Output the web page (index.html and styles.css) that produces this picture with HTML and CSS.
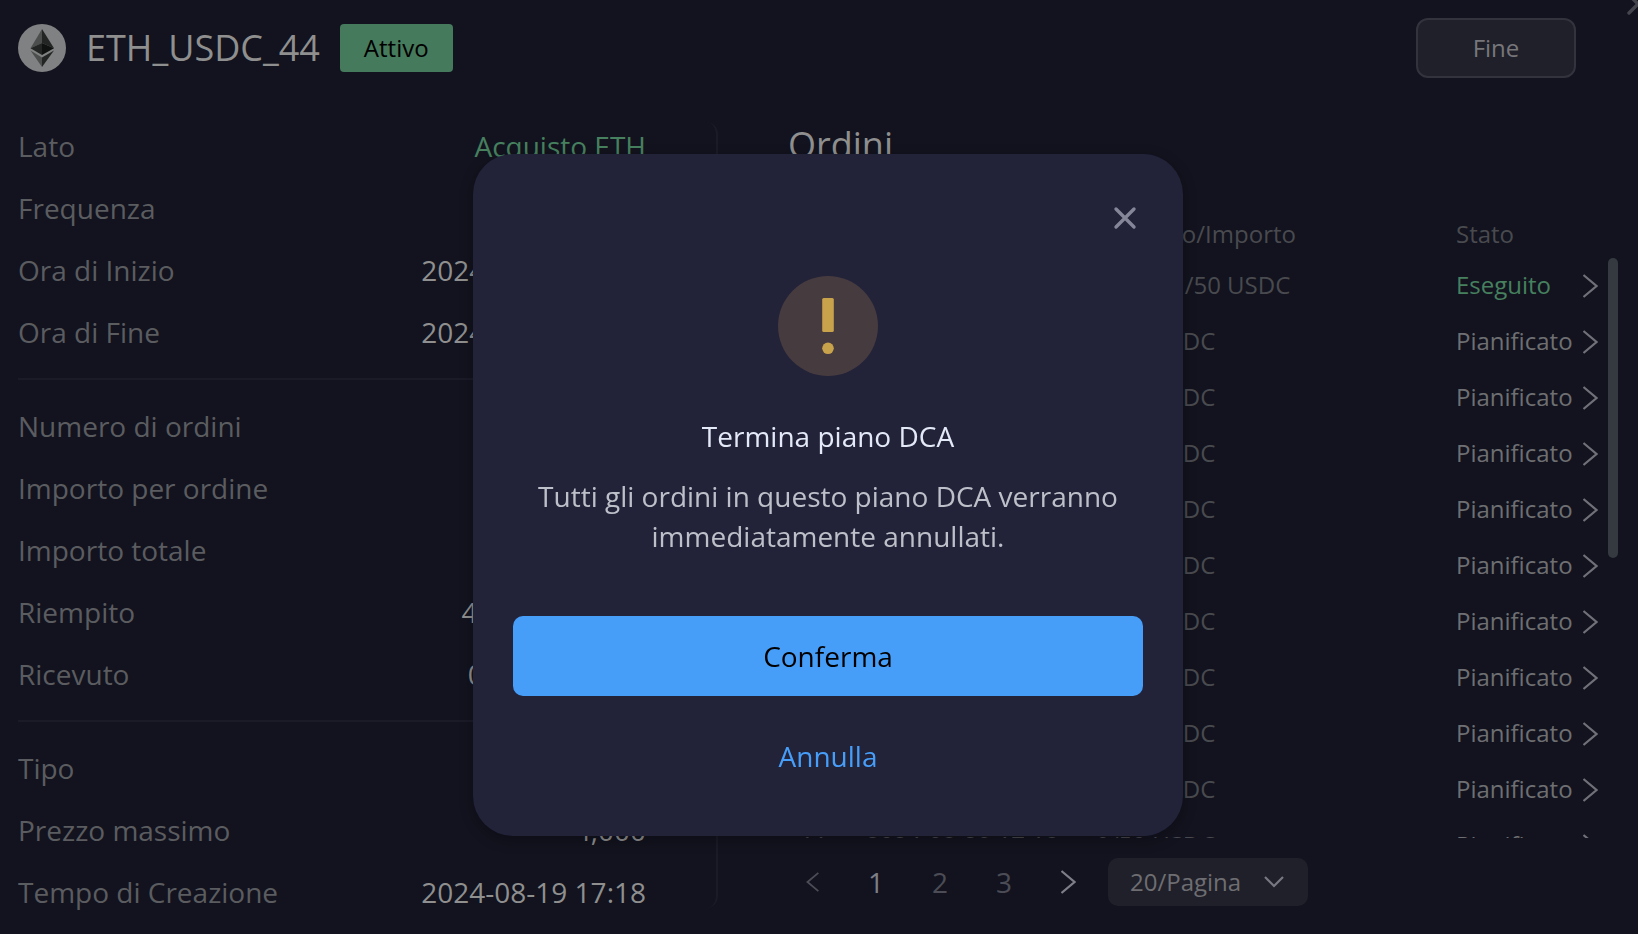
FILE: index.html
```html
<!DOCTYPE html>
<html lang="it">
<head>
<meta charset="utf-8">
<meta name="viewport" content="width=device-width, initial-scale=1">
<title>ETH_USDC_44</title>
<link rel="stylesheet" href="styles.css">
</head>
<body>
<svg class="sprite" aria-hidden="true">
  <symbol id="chevron" viewBox="0 0 15 24"><path d="M0.500 1L13.500 12L0.500 23" fill="none" stroke="currentColor" stroke-width="2.200"/></symbol>
  <symbol id="cross" viewBox="0 0 24 24"><path d="M3 3L21 21M21 3L3 21" fill="none" stroke="currentColor" stroke-width="3.400" stroke-linecap="round"/></symbol>
</svg>
<main class="page">
  <header class="header">
    <svg class="coin" viewBox="0 0 48 48" aria-hidden="true">
      <circle cx="24" cy="24" r="24" fill="#808182"/>
      <path d="M24 5L12.500 24.300L24 19z" fill="#4c4d4d"/>
      <path d="M24 5L36 24.300L24 19z" fill="#232424"/>
      <path d="M12.500 24.300L24 19V31z" fill="#232424"/>
      <path d="M36 24.300L24 19V31z" fill="#101111"/>
      <path d="M12.500 26.500L24 33.500V43z" fill="#4c4d4d"/>
      <path d="M36 26.500L24 33.500V43z" fill="#232424"/>
    </svg>
    <h1 class="title">ETH_USDC_44</h1>
    <span class="badge">Attivo</span>
    <button class="end-button" type="button">Fine</button>
  </header>
  <button class="page-close" type="button" aria-label="Chiudi"><svg class="icon-cross"><use href="#cross"/></svg></button>

  <div class="content">
    <section class="details">
      <dl class="group">
        <div class="row"><dt>Lato</dt><dd class="buy">Acquisto ETH</dd></div>
        <div class="row"><dt>Frequenza</dt><dd>Giornaliera</dd></div>
        <div class="row"><dt>Ora di Inizio</dt><dd>2024-08-19 17:18</dd></div>
        <div class="row"><dt>Ora di Fine</dt><dd>2024-10-07 17:18</dd></div>
      </dl>
      <dl class="group">
        <div class="row"><dt>Numero di ordini</dt><dd>50</dd></div>
        <div class="row"><dt>Importo per ordine</dt><dd>50 USDC</dd></div>
        <div class="row"><dt>Importo totale</dt><dd>2,500 USDC</dd></div>
        <div class="row"><dt>Riempito</dt><dd>49.9996 USDC</dd></div>
        <div class="row"><dt>Ricevuto</dt><dd>0.018963 ETH</dd></div>
      </dl>
      <dl class="group">
        <div class="row"><dt>Tipo</dt><dd>Limite</dd></div>
        <div class="row"><dt>Prezzo massimo</dt><dd>4,000</dd></div>
        <div class="row"><dt>Tempo di Creazione</dt><dd>2024-08-19 17:18</dd></div>
      </dl>
    </section>

    <section class="orders">
      <h2 class="orders-title">Ordini</h2>
      <div class="orders-scroll">
        <table class="table">
          <colgroup><col class="col-number"><col class="col-time"><col><col class="col-state"><col class="col-open"></colgroup>
          <thead><tr><th>#</th><th>Ora</th><th>Riempito/Importo</th><th>Stato</th><th></th></tr></thead>
          <tbody>
            <tr><td>1</td><td>2024-08-19 17:18</td><td>0.01891/50 USDC</td><td class="done">Eseguito</td><td class="open"><svg class="icon-chevron"><use href="#chevron"/></svg></td></tr>
            <tr><td>2</td><td>2024-08-20 17:18</td><td>0/50 USDC</td><td class="planned">Pianificato</td><td class="open"><svg class="icon-chevron"><use href="#chevron"/></svg></td></tr>
            <tr><td>3</td><td>2024-08-21 17:18</td><td>0/50 USDC</td><td class="planned">Pianificato</td><td class="open"><svg class="icon-chevron"><use href="#chevron"/></svg></td></tr>
            <tr><td>4</td><td>2024-08-22 17:18</td><td>0/50 USDC</td><td class="planned">Pianificato</td><td class="open"><svg class="icon-chevron"><use href="#chevron"/></svg></td></tr>
            <tr><td>5</td><td>2024-08-23 17:18</td><td>0/50 USDC</td><td class="planned">Pianificato</td><td class="open"><svg class="icon-chevron"><use href="#chevron"/></svg></td></tr>
            <tr><td>6</td><td>2024-08-24 17:18</td><td>0/50 USDC</td><td class="planned">Pianificato</td><td class="open"><svg class="icon-chevron"><use href="#chevron"/></svg></td></tr>
            <tr><td>7</td><td>2024-08-25 17:18</td><td>0/50 USDC</td><td class="planned">Pianificato</td><td class="open"><svg class="icon-chevron"><use href="#chevron"/></svg></td></tr>
            <tr><td>8</td><td>2024-08-26 17:18</td><td>0/50 USDC</td><td class="planned">Pianificato</td><td class="open"><svg class="icon-chevron"><use href="#chevron"/></svg></td></tr>
            <tr><td>9</td><td>2024-08-27 17:18</td><td>0/50 USDC</td><td class="planned">Pianificato</td><td class="open"><svg class="icon-chevron"><use href="#chevron"/></svg></td></tr>
            <tr><td>10</td><td>2024-08-28 17:18</td><td>0/50 USDC</td><td class="planned">Pianificato</td><td class="open"><svg class="icon-chevron"><use href="#chevron"/></svg></td></tr>
            <tr><td>11</td><td>2024-08-29 17:18</td><td>0/50 USDC</td><td class="planned">Pianificato</td><td class="open"><svg class="icon-chevron"><use href="#chevron"/></svg></td></tr>
          </tbody>
        </table>
        <div class="thumb"></div>
      </div>
      <nav class="pagination" aria-label="Pagine">
        <button class="page-button" type="button" aria-label="Precedente" disabled><svg class="icon-previous"><use href="#chevron"/></svg></button>
        <button class="page-button current" type="button" aria-current="page">1</button>
        <button class="page-button" type="button">2</button>
        <button class="page-button" type="button">3</button>
        <button class="page-button next" type="button" aria-label="Successiva"><svg class="icon-chevron"><use href="#chevron"/></svg></button>
        <div class="size">
          <select class="size-select" aria-label="Ordini per pagina"><option>20/Pagina</option><option>50/Pagina</option></select>
          <svg class="size-arrow" viewBox="0 0 20 12" aria-hidden="true"><path d="M1 1L10 10L19 1" fill="none" stroke="currentColor" stroke-width="2.200"/></svg>
        </div>
      </nav>
    </section>
  </div>
</main>

<div class="overlay">
  <div class="dialog" role="dialog" aria-modal="true" aria-labelledby="dialog-title">
    <button class="dialog-close" type="button" aria-label="Chiudi"><svg class="icon-cross"><use href="#cross"/></svg></button>
    <svg class="warning" viewBox="0 0 100 100" aria-hidden="true">
      <circle cx="50" cy="50" r="50" fill="#463b3f"/>
      <rect x="44.200" y="22" width="11.600" height="34" rx="1.500" fill="#c9a24c"/>
      <circle cx="50" cy="72.300" r="5.800" fill="#c9a24c"/>
    </svg>
    <h2 class="dialog-title" id="dialog-title">Termina piano DCA</h2>
    <p class="dialog-text">Tutti gli ordini in questo piano DCA verranno immediatamente annullati.</p>
    <button class="confirm" type="button">Conferma</button>
    <button class="cancel" type="button">Annulla</button>
  </div>
</div>
</body>
</html>
```
FILE: styles.css
```css
* { box-sizing: border-box; }

body {
  margin: 0;
  min-height: 100vh;
  overflow: hidden;
  background: #12131e;
  color: #8f8f8f;
  font-family: "Open Sans", "Noto Sans", sans-serif;
  font-size: 28px;
  line-height: 28px;
}

h1, h2, p, dl, dd { margin: 0; font-weight: 400; }

button, select {
  margin: 0;
  padding: 0;
  border: 0;
  background: none;
  color: inherit;
  font: inherit;
}

svg { display: block; }
.sprite { position: absolute; width: 0; height: 0; }
.icon-cross { width: 24px; height: 24px; }
.icon-chevron { width: 15px; height: 24px; }
.icon-previous { width: 13px; height: 20px; transform: rotate(180deg); }

.page { padding: 18px 20px 26px 18px; }

.header {
  display: flex;
  align-items: center;
  padding-right: 42px;
}
.coin { width: 48px; height: 48px; }
.title { margin-left: 20px; font-size: 36px; line-height: 48px; }
.badge {
  margin-left: 20px;
  padding: 0 24px;
  border-radius: 4px;
  background: #467a5c;
  color: #000;
  font-size: 24px;
  line-height: 48px;
}
.end-button {
  width: 160px;
  height: 60px;
  margin-left: auto;
  border: 2px solid #32333d;
  border-radius: 12px;
  background: #20202a;
  color: #77777b;
  font-size: 24px;
}
.page-close { position: absolute; top: -8px; right: -12px; color: #45454e; }

.content {
  display: grid;
  grid-template-columns: 700px 1fr;
  margin-top: 44px;
}

.details {
  padding: 10px 70px 2px 0;
  border-right: 2px solid #1a1b27;
  border-radius: 12px;
}
.group { display: grid; gap: 34px; }
.group + .group {
  margin-top: 32px;
  padding-top: 32px;
  border-top: 2px solid #1b1b28;
}
.row { display: flex; justify-content: space-between; }
.row dt { color: #5b5c60; }
.row .buy { color: #46805e; }

.orders {
  display: flex;
  flex-direction: column;
  min-width: 0;
  padding: 0 0 2px 70px;
}
.orders-title { font-size: 36px; line-height: 46px; }
.orders-scroll {
  position: relative;
  flex: 1 1 auto;
  height: 0;
  margin: 42px 0 20px;
  padding-right: 10px;
  overflow: hidden;
}
.table {
  width: 100%;
  table-layout: fixed;
  border-collapse: collapse;
  color: #494a4f;
  font-size: 24px;
  text-align: left;
}
.col-number { width: 78px; }
.col-time { width: 230px; }
.col-state { width: 127px; }
.col-open { width: 25px; }
.table th { height: 48px; padding: 0; font-weight: 400; }
.table td { height: 56px; padding: 0 0 2px; white-space: nowrap; }
.table th:first-child, .table td:first-child { padding-left: 12px; }
.table .done { color: #46805e; }
.table .planned { color: #6e6f72; }
.table .open { padding: 0; color: #6f7078; }
.thumb {
  position: absolute;
  top: 48px;
  right: 0;
  width: 10px;
  height: 300px;
  border-radius: 5px;
  background: #343a40;
}

.pagination { display: flex; gap: 16px; color: #4b4c55; }
.page-button { display: grid; place-items: center; width: 48px; height: 48px; }
.page-button.current, .page-button.next { color: #7d7e87; }
.size { position: relative; color: #777881; }
.size-select {
  width: 200px;
  height: 48px;
  padding: 0 48px 0 22px;
  border-radius: 10px;
  background: #20202a;
  color: #6e6e72;
  font-size: 24px;
  line-height: 36px;
  appearance: none;
}
.size-arrow { position: absolute; top: 18px; right: 24px; width: 20px; height: 12px; pointer-events: none; }

.overlay {
  position: fixed;
  inset: 0;
  display: grid;
  place-items: center;
  padding: 56px 0 0 18px;
}
.dialog {
  position: relative;
  display: flex;
  flex-direction: column;
  align-items: center;
  width: 710px;
  max-width: 100%;
  padding: 122px 40px 40px;
  border-radius: 40px;
  background: #222239;
  box-shadow: 0 4px 14px rgba(0, 0, 0, 0.3);
  text-align: center;
}
.dialog-close { position: absolute; top: 52px; right: 46px; color: #858697; }
.warning { width: 100px; height: 100px; }
.dialog-title { margin-top: 40px; color: #e3e9f6; font-size: 28px; line-height: 40px; }
.dialog-text { margin-top: 20px; color: #bdc0c9; line-height: 40px; }
.confirm, .cancel { width: 100%; height: 80px; }
.confirm { margin-top: 60px; border-radius: 10px; background: #469ef9; color: #000; }
.cancel { margin-top: 20px; color: #469ef9; }
```
